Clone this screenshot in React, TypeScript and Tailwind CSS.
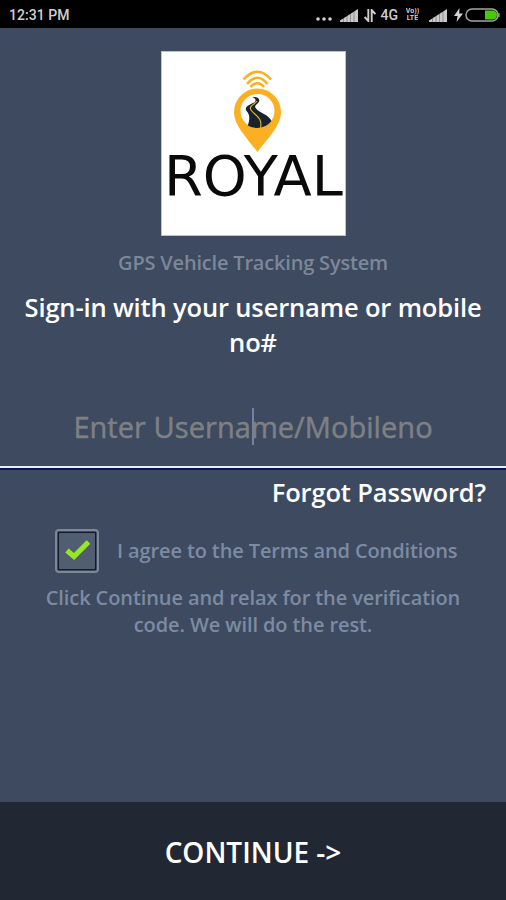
import React from "react";

function Signal() {
  return (
    <svg className="block h-[13px] w-[18px]" viewBox="0 0 18 13">
      <path d="M0 13V11.5L18 0V13Z" fill="#c9c9c9" />
      <path d="M3.5 5V13M7 3V13M10.5 1V13M14 0V13" stroke="#000" strokeWidth=".7" opacity=".4" />
    </svg>
  );
}

function StatusBar() {
  return (
    <header className="flex h-7 shrink-0 items-center bg-black pl-[9px] pr-[5px] pt-[2px] font-['Roboto',sans-serif] text-[13px] font-medium text-[#cfcfcf]">
      <span className="text-[14px] tracking-[0.05px]">12:31 PM</span>
      <div className="ml-auto flex items-center">
        <svg className="mt-[7px] h-[4px] w-[16px]" viewBox="0 0 16 4" fill="#d0d0d0">
          <circle cx="2" cy="2" r="1.8" /><circle cx="8" cy="2" r="1.8" /><circle cx="14" cy="2" r="1.8" />
        </svg>
        <div className="ml-[8px]"><Signal /></div>
        <svg className="ml-[6px] h-[13px] w-[12px]" viewBox="0 0 12 13" fill="none" stroke="#d0d0d0" strokeWidth="1.9">
          <path d="M4.3 0V12L.6 8M7.7 13V1L11.4 5" />
        </svg>
        <span className="ml-[5px] text-[14px]">4G</span>
        <span className="ml-[6px] flex w-[17px] flex-col items-center text-[7px] font-bold leading-[7px]">
          <span className="block h-[7px] overflow-hidden">Vo))</span>
          <span className="block h-[7px] overflow-hidden">LTE</span>
        </span>
        <div className="ml-[8px]"><Signal /></div>
        <svg className="ml-[7px] h-[14px] w-[9px]" viewBox="0 0 9 14"><path d="M5.5 0L0 8H3.6L2.5 14L9 5.5H5.2Z" fill="#d4d4d4" /></svg>
        <svg className="ml-[2px] h-[14px] w-[36px]" viewBox="0 0 36 14">
          <rect x="1" y="1" width="32" height="12" rx="6" fill="none" stroke="#a5a5a5" strokeWidth="1.5" />
          <path d="M34 5V9" stroke="#a5a5a5" strokeWidth="1.2" />
          <path d="M20 2.5H27.500A4.5 4.5 0 0 1 27.500 11.5H20Z" fill="#48c90b" />
        </svg>
      </div>
    </header>
  );
}

function Logo() {
  return (
    <div className="mt-[23px] h-[185px] w-[185px] self-center border border-[#b9c2cf] bg-white">
      <svg className="block h-full w-full" viewBox="162 52 183 183">
        <g fill="none" stroke="#fbb024" strokeWidth="2.6">
          <path d="M243.500 79.500Q257.500 64 271 79.500" />
          <path d="M247 84Q257.500 71.500 267.500 84" />
          <path d="M250.500 87Q257.500 79.500 264 87" />
        </g>
        <path d="M257.500 88.500A23.500 23.500 0 0 1 281 112C281 125 269 137 257.500 152C246 137 234 125 234 112A23.500 23.500 0 0 1 257.500 88.500Z" fill="#fbb024" />
        <circle cx="257.500" cy="111" r="17" fill="#fff" />
        <path d="M252.500 97.200C257 96 261 99 258.500 102.500C256 105.500 253.500 106 256.500 109C260 113 269 115 271.500 121Q266 128 257.500 128Q252 128 247.800 125.500C250 119 250 114.500 246.500 111C244 107 249 105 253 103C257 101 256 98.500 252.500 97.200Z" fill="#18232c" />
        <path d="M257 101C254 105 248.500 106 251 110C254 115 263 117 260.500 128" fill="none" stroke="#e3ae32" strokeWidth="1.2" />
        <g fontFamily="'DejaVu Sans', sans-serif" fontSize="54.5" fontWeight="400" fill="#0a0a0a">
          <text x="164" y="194.500" textLength="179" lengthAdjust="spacingAndGlyphs">ROYAL</text>
        </g>
      </svg>
    </div>
  );
}

export default function App() {
  return (
    <main className="flex h-[900px] w-[506px] flex-col overflow-hidden bg-[#3d4a60] font-['Open_Sans',sans-serif]">
      <StatusBar />
      <Logo />
      <p className="mt-[13px] text-center text-[20px] font-semibold leading-[27px] tracking-[-0.19px] text-[#7c8799]">GPS Vehicle Tracking System</p>
      <h1 className="mt-[14px] px-4 text-center text-[25.5px] font-semibold leading-[35px] tracking-[-0.15px] text-white">Sign-in with your username or mobile no#</h1>
      <div className="mt-[43px] flex h-[65px] shrink-0 items-center justify-center border-b-2 border-[#e9ebff] pb-[15px] shadow-[0_2px_0_#0a1158]">
        <div className="relative text-[29px] font-normal leading-[38px] tracking-[0.05px] text-[#7e8083] [-webkit-text-stroke:0.5px_#7e8083]">
          Enter Username/Mobileno
          <i className="absolute left-[179px] top-0 h-[37px] w-[2px] bg-[#72839f]" />
        </div>
      </div>
      <a className="mt-[7px] self-end pr-5 text-[25.5px] font-semibold leading-[35px] tracking-[-0.15px] text-white">Forgot Password?</a>
      <label className="mt-[19px] flex h-[44px] items-center pl-[55px] text-[20px] font-semibold tracking-[-0.12px] text-[#7d8ba2]">
        <span className="flex h-[44px] w-[44px] items-center justify-center rounded-[4px] border-2 border-[#7b8896] p-px">
          <span className="flex h-full w-full items-center justify-center border border-[#131b29] bg-[#515d70]">
            <svg className="h-[24px] w-[28px]" viewBox="0 0 28 24"><path d="M4 11.500L11 17.500L25.500 3" fill="none" stroke="#98e724" strokeWidth="5.2" /></svg>
          </span>
        </span>
        <span className="ml-[18px] whitespace-nowrap">I agree to the Terms and Conditions</span>
      </label>
      <p className="mt-[11px] px-10 text-center text-[20px] font-semibold leading-[27px] tracking-[-0.1px] text-[#7d8ba2]">Click Continue and relax for the verification code. We will do the rest.</p>
      <button className="mt-auto h-[98px] shrink-0 bg-[#212833] pt-[2px] text-[28px] font-semibold text-white">CONTINUE -&gt;</button>
    </main>
  );
}
